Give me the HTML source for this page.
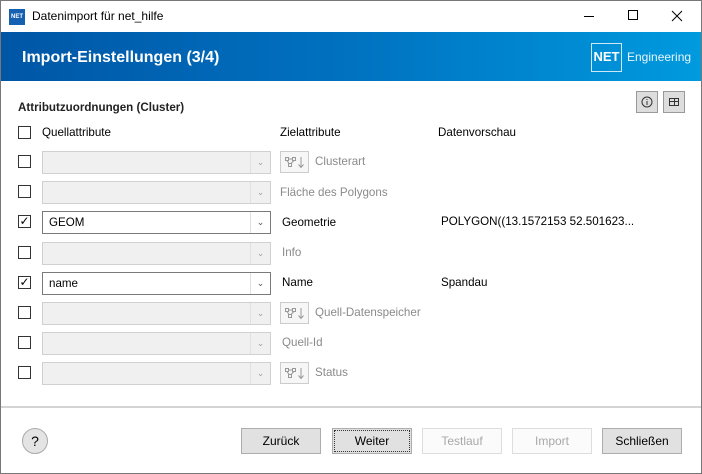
<!DOCTYPE html>
<html><head><meta charset="utf-8"><style>
*{margin:0;padding:0;box-sizing:border-box}
body{width:702px;height:474px;overflow:hidden;background:#fff;font-family:"Liberation Sans",sans-serif;font-size:12px;color:#000;position:relative}
.win{position:absolute;left:0;top:0;width:702px;height:474px;border:1px solid #777}
.abs{position:absolute}
.cb{position:absolute;left:17px;width:13px;height:13px;border:1px solid #333;background:#fff}
.combo{position:absolute;left:41px;width:229px;height:23px;border:1px solid #d0d0d0;background:#f0f0f0}
.combo.en{border-color:#7a7a7a;background:#fff}
.combo .ar{position:absolute;right:0;top:0;width:20px;height:21px;border-left:1px solid #e0e0e0;color:#a0a0a0;font-size:9px;text-align:center;line-height:21px}
.combo.en .ar{color:#555}
.lbl{position:absolute;font-size:11.6px}
.dis{color:#8a8a8a}
.ib{position:absolute;left:279px;width:29px;height:22px;border:1px solid #ccc;background:#f6f6f6}
.btn{position:absolute;top:427px;width:80px;height:26px;border:1px solid #adadad;background:#e1e1e1;text-align:center;line-height:24px;font-size:12px}
.btn.d{background:#fbfbfb;border-color:#ddd;color:#a8a8a8}
</style></head><body><div class="win">
<div class="abs" style="left:8px;top:8px;width:16px;height:16px;background:#1560b0;color:#fff;font-size:6px;font-weight:bold;line-height:16px;text-align:center">NET</div>
<div class="lbl" style="left:31px;top:8px;font-size:12px">Datenimport für net_hilfe</div>
<svg class="abs" style="left:570px;top:0" width="130" height="30"><path d="M13 15.5h10M57.5 9.5h9v9h-9zM101 10l10 10M111 10l-10 10" stroke="#000" fill="none"/></svg>
<div class="abs" style="left:0;top:31px;width:700px;height:49px;background:linear-gradient(90deg,#0056a6,#0072c0 50%,#009ade)"></div>
<div class="lbl" style="left:21px;top:48px;color:#fff;font-size:16px;font-weight:bold">Import-Einstellungen (3/4)</div>
<div class="abs" style="left:590px;top:42px;width:31px;height:29px;border:1px solid #cfe8f8;color:#fff;font-weight:bold;font-size:13px;text-align:center;line-height:26px">NET</div>
<div class="lbl" style="left:626px;top:49px;color:#eaf6fd;font-size:12px">Engineering</div>
<div class="lbl" style="left:17px;top:100px;font-weight:bold;color:#222">Attributzuordnungen (Cluster)</div>
<div class="abs" style="left:635px;top:90px;width:22px;height:22px;border:1px solid #999;background:#ddd"><svg class="abs" style="left:4px;top:4px" width="12" height="12"><circle cx="6" cy="6" r="5" stroke="#333" fill="none"/><path d="M6 5v4M6 3v1" stroke="#333"/></svg></div>
<div class="abs" style="left:662px;top:90px;width:22px;height:22px;border:1px solid #999;background:#ddd"><div class="abs" style="left:5px;top:6px;width:10px;height:8px;border:1px solid #333;background:linear-gradient(#333,#333) 4px 0/1px 100% no-repeat,linear-gradient(#333,#333) 0 2px/100% 1px no-repeat"></div></div>
<div class="cb" style="top:125px"></div>
<div class="lbl" style="left:41px;top:125px">Quellattribute</div>
<div class="lbl" style="left:279px;top:125px">Zielattribute</div>
<div class="lbl" style="left:437px;top:125px">Datenvorschau</div>

<div class="cb" style="top:154px"></div><div class="combo" style="top:150px"><div class="ar">⌄</div></div>
<div class="ib" style="top:150px"><svg class="abs" style="left:3px;top:3px" width="22" height="15"><g stroke="#999" fill="none"><rect x="1.5" y="2.5" width="3" height="3"/><rect x="8.5" y="2.5" width="3" height="3"/><rect x="4.5" y="8.5" width="3" height="3"/><path d="M4.5 4h4M3 5.5l2 3M10 5.5l-3 3M17 2v10M14.5 9.5l2.5 3 2.5-3"/></g></svg></div><div class="lbl dis" style="left:314px;top:154px">Clusterart</div>

<div class="cb" style="top:184px"></div><div class="combo" style="top:180px"><div class="ar">⌄</div></div>
<div class="lbl dis" style="left:279px;top:185px">Fläche des Polygons</div>

<div class="cb" style="top:214px;line-height:11px;font-size:12px;text-align:center">✓</div><div class="combo en" style="top:210px"><div class="lbl" style="left:6px;top:4px">GEOM</div><div class="ar">⌄</div></div>
<div class="lbl" style="left:281px;top:215px">Geometrie</div><div class="lbl" style="left:440px;top:214px">POLYGON((13.1572153 52.501623...</div>

<div class="cb" style="top:245px"></div><div class="combo" style="top:241px"><div class="ar">⌄</div></div>
<div class="lbl dis" style="left:281px;top:245px">Info</div>

<div class="cb" style="top:275px;line-height:11px;font-size:12px;text-align:center">✓</div><div class="combo en" style="top:271px"><div class="lbl" style="left:6px;top:4px">name</div><div class="ar">⌄</div></div>
<div class="lbl" style="left:281px;top:275px">Name</div><div class="lbl" style="left:440px;top:275px">Spandau</div>

<div class="cb" style="top:305px"></div><div class="combo" style="top:301px"><div class="ar">⌄</div></div>
<div class="ib" style="top:301px"><svg class="abs" style="left:3px;top:3px" width="22" height="15"><g stroke="#999" fill="none"><rect x="1.5" y="2.5" width="3" height="3"/><rect x="8.5" y="2.5" width="3" height="3"/><rect x="4.5" y="8.5" width="3" height="3"/><path d="M4.5 4h4M3 5.5l2 3M10 5.5l-3 3M17 2v10M14.5 9.5l2.5 3 2.5-3"/></g></svg></div><div class="lbl dis" style="left:314px;top:305px">Quell-Datenspeicher</div>

<div class="cb" style="top:335px"></div><div class="combo" style="top:331px"><div class="ar">⌄</div></div>
<div class="lbl dis" style="left:281px;top:335px">Quell-Id</div>

<div class="cb" style="top:365px"></div><div class="combo" style="top:361px"><div class="ar">⌄</div></div>
<div class="ib" style="top:361px"><svg class="abs" style="left:3px;top:3px" width="22" height="15"><g stroke="#999" fill="none"><rect x="1.5" y="2.5" width="3" height="3"/><rect x="8.5" y="2.5" width="3" height="3"/><rect x="4.5" y="8.5" width="3" height="3"/><path d="M4.5 4h4M3 5.5l2 3M10 5.5l-3 3M17 2v10M14.5 9.5l2.5 3 2.5-3"/></g></svg></div><div class="lbl dis" style="left:314px;top:365px">Status</div>

<div class="abs" style="left:0;top:405px;width:700px;height:2px;background:#d4d4d4"></div>
<div class="abs" style="left:21px;top:427px;width:26px;height:26px;border:1px solid #aaa;border-radius:50%;background:#e4e4e4;text-align:center;line-height:24px;font-size:14px">?</div>
<div class="btn" style="left:240px">Zurück</div>
<div class="btn" style="left:331px;outline:1px dotted #333;outline-offset:-3px">Weiter</div>
<div class="btn d" style="left:421px">Testlauf</div>
<div class="btn d" style="left:511px">Import</div>
<div class="btn" style="left:601px">Schließen</div>
</div></body></html>
